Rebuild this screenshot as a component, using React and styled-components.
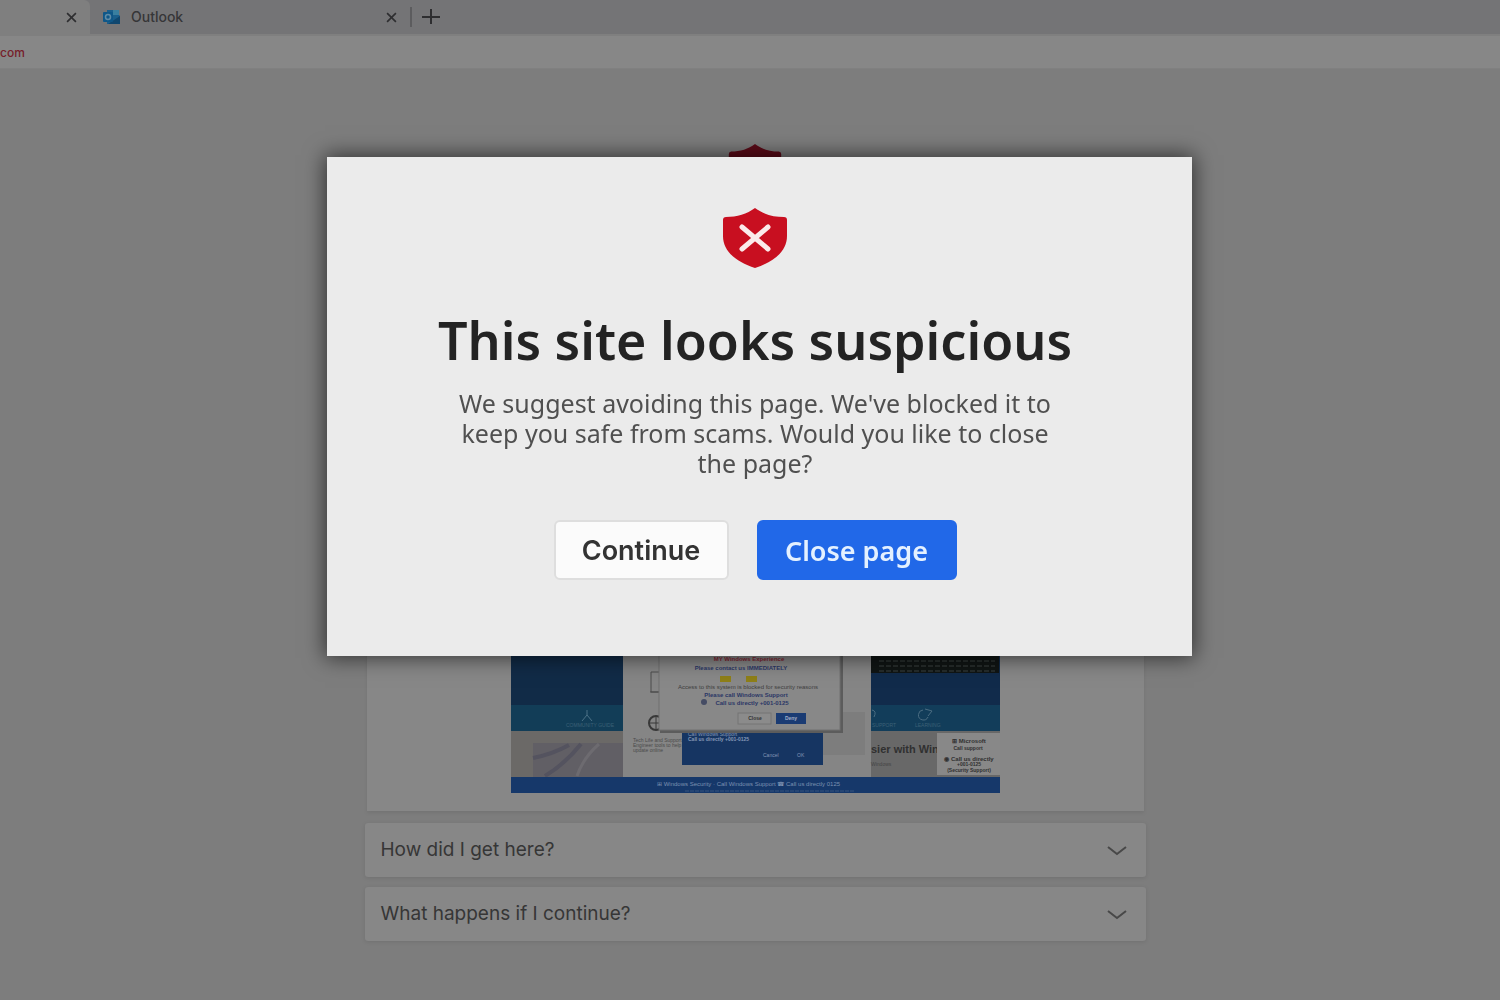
import styled, { createGlobalStyle } from 'styled-components';

const GlobalStyle = createGlobalStyle`
  * {
    box-sizing: border-box;
  }

  body {
    margin: 0;
    background: #7d7d7d;
    font-family: 'Noto Sans', 'Open Sans', sans-serif;
  }
`;

const Browser = styled.div`
  height: 100vh;
  overflow: hidden;
  display: flex;
  flex-direction: column;
`;

const TabStrip = styled.div`
  display: flex;
  align-items: center;
  height: 34px;
  background: #747476;
`;

const Tab = styled.div`
  display: flex;
  align-items: center;
  gap: 10px;
  width: ${({ $active }) => ($active ? '90px' : '320px')};
  height: 100%;
  padding: 0 13px;
  background: ${({ $active }) => ($active ? '#7f7f7f' : 'transparent')};
  border-top-right-radius: 6px;
  color: #363638;
  font: 500 14px/20px Inter, sans-serif;

  button {
    margin-left: auto;
  }
`;

const IconButton = styled.button`
  display: flex;
  padding: 0;
  border: none;
  background: none;
  color: #2e2e30;
`;

const Divider = styled.span`
  width: 2px;
  height: 20px;
  margin-right: 10px;
  background: #5c5c5e;
`;

const AddressBar = styled.div`
  display: flex;
  align-items: center;
  height: 35px;
  padding-top: 2px;
  border-top: 2px solid #7f7f7f;
  border-bottom: 1px solid #808080;
  background: #878787;
  color: #76202a;
  font: 500 12px/20px Inter, sans-serif;
`;

const Main = styled.main`
  display: flex;
  flex-direction: column;
  align-items: center;
  padding: 75px 0 0 10px;
`;

const Card = styled.section`
  display: flex;
  justify-content: center;
  width: 777px;
  margin: 264px 0 12px;
  padding: 60px 0 18px;
  background: #878787;
  box-shadow: 0 2px 4px rgba(0, 0, 0, 0.08);
`;

const Question = styled.button`
  display: flex;
  align-items: center;
  justify-content: space-between;
  width: 781px;
  height: 54px;
  margin-bottom: 10px;
  padding: 0 19px 0 16px;
  border: none;
  border-radius: 3px;
  background: #878787;
  box-shadow: 0 1px 4px rgba(0, 0, 0, 0.1);
  color: #363636;
  font: 400 19px/24px Inter, sans-serif;
`;

const Overlay = styled.div`
  position: fixed;
  inset: 0;
  display: flex;
  justify-content: center;
  align-items: flex-start;
  padding: 157px 0 0 19px;
`;

const Dialog = styled.div`
  display: flex;
  flex-direction: column;
  align-items: center;
  width: 865px;
  padding: 51px 9px 76px 0;
  background: #ebebeb;
  box-shadow: 0 0 20px 2px rgba(0, 0, 0, 0.6);
  text-align: center;
`;

const Title = styled.h1`
  margin: 38px 0 14px;
  color: #232323;
  font-size: 52px;
  font-weight: 600;
  line-height: 68px;
`;

const Message = styled.p`
  width: 620px;
  margin: 0 0 42px;
  color: #505050;
  font-size: 25px;
  line-height: 30px;
`;

const Actions = styled.div`
  display: flex;
  gap: 28px;
`;

const Action = styled.button`
  height: 60px;
  width: ${({ $primary }) => ($primary ? '200px' : '175px')};
  padding: 0;
  border: 2px solid ${({ $primary }) => ($primary ? '#2168e8' : '#dedede')};
  border-radius: 6px;
  background: ${({ $primary }) => ($primary ? '#2168e8' : '#fbfbfb')};
  color: ${({ $primary }) => ($primary ? '#e4f1ff' : '#333333')};
  font-family: ${({ $primary }) =>
    $primary ? "'Noto Sans', sans-serif" : 'Inter, sans-serif'};
  font-size: 27px;
  font-weight: 600;
`;

const Cross = ({ size }) => (
  <svg width={size} height={size} viewBox="0 0 10 10" stroke="currentColor" strokeWidth="1.5">
    <path d="M1 1l8 8M9 1l-8 8" />
  </svg>
);

const Shield = ({ width, height, color, mark }) => (
  <svg width={width} height={height} viewBox="0 0 66 60" preserveAspectRatio="none">
    <path
      fill={color}
      d="M33 0C25 6 15 9 4 9Q1 9 1 12V28C1 44 15 54 33 60C51 54 65 44 65 28V12Q65 9 62 9C51 9 41 6 33 0Z"
    />
    <path d="M20 19L46 41M46 19L20 41" stroke={mark} strokeWidth="5" strokeLinecap="round" />
  </svg>
);

const OutlookLogo = () => (
  <svg width="18" height="16" viewBox="0 0 18 16">
    <path fill="#1b5f8c" d="M5 1h11v5l1 1v8H4V1z" />
    <path fill="#3a7fa0" d="M10 1h6v5h-6z" />
    <path fill="#10476f" d="M5 15l12-8v8z" />
    <rect y="3" width="10" height="10" rx="1" fill="#0f5788" />
    <circle cx="5" cy="8" r="2.5" fill="none" stroke="#5f8ba6" strokeWidth="1.5" />
  </svg>
);

const Chevron = () => (
  <svg width="20" height="12" viewBox="0 0 20 12" fill="none" stroke="#484848" strokeWidth="2">
    <path d="M1 3l9 7 9-7" />
  </svg>
);

const ScamPreview = () => (
  <svg
    width="489"
    height="275"
    viewBox="0 0 489 275"
    fontFamily="'Liberation Sans', sans-serif"
    fontSize="6"
  >
    <rect width="489" height="275" fill="#858585" />
    {/* left side of the desktop */}
    <rect width="112" height="187" fill="#112b47" />
    <rect y="187" width="112" height="26" fill="#123d57" />
    <path d="M76 192v5l-5 6M76 197l5 6" stroke="#4b7186" fill="none" />
    <text x="55" y="209" fill="#3c6076" fontSize="5">COMMUNITY GUIDE</text>
    <rect y="213" width="112" height="46" fill="#6b6967" />
    <rect x="22" y="225" width="90" height="34" fill="#615f65" />
    <path d="M22 240Q42 236 58 227M34 258Q54 246 70 226" stroke="#54535f" strokeWidth="4" fill="none" />
    <path d="M66 258Q72 240 88 226" stroke="#6d6b70" strokeWidth="3" fill="none" />
    {/* article in the middle */}
    <path d="M148 154h-8v20h8M139 174h9" stroke="#4c4c4c" fill="none" />
    <circle cx="145" cy="205" r="7" fill="none" stroke="#383838" strokeWidth="2" />
    <path d="M139 205h10M145 199v12" stroke="#383838" />
    <g fill="#4b4b4b" fontSize="5">
      <text x="122" y="224">Tech Life and Support</text>
      <text x="122" y="229">Engineer tools to help</text>
      <text x="122" y="234">update online</text>
    </g>
    <rect x="312" y="194" width="42" height="43" fill="#7d7d7d" />
    <rect x="171" y="190" width="141" height="57" fill="#163562" />
    <g fill="#8497b5" fontSize="5">
      <text x="177" y="218">Call Windows Support</text>
      <text x="177" y="223" fontWeight="700">Call us directly +001-0125</text>
      <text x="252" y="239">Cancel</text>
      <text x="286" y="239">OK</text>
    </g>
    {/* warning popup */}
    <rect x="149" y="90" width="183" height="125" fill="#5c5c5c" />
    <rect x="148" y="90" width="181" height="122" fill="#888" stroke="#707070" />
    <g textAnchor="middle" fill="#2b3766" fontWeight="700">
      <text x="238" y="143" fill="#802632">MY Windows Experience</text>
      <text x="230" y="152">Please contact us IMMEDIATELY</text>
      <rect x="209" y="158" width="11" height="6" fill="#8e7f18" />
      <rect x="235" y="158" width="11" height="6" fill="#8e7f18" />
      <text x="237" y="171" fill="#404040" fontWeight="400">
        Access to this system is blocked for security reasons
      </text>
      <text x="235" y="179">Please call Windows Support</text>
      <circle cx="193" cy="184" r="3" fill="#454c64" />
      <text x="241" y="187">Call us directly +001-0125</text>
    </g>
    <rect x="227" y="195" width="33" height="11" fill="#8b8b8b" stroke="#747474" />
    <rect x="265" y="195" width="30" height="11" fill="#1a3b73" />
    <g textAnchor="middle" fontSize="5" fontWeight="700">
      <text x="244" y="202" fill="#333">Close</text>
      <text x="280" y="202" fill="#a2afc6">Deny</text>
    </g>
    {/* right side of the desktop */}
    <rect x="360" width="129" height="187" fill="#112b4b" />
    <rect x="360" width="128" height="155" fill="#101514" />
    <path d="M368 143h116M368 148h116M368 153h116" stroke="#3d4443" strokeDasharray="5 2" />
    <rect x="360" y="187" width="129" height="26" fill="#123d5a" />
    <path d="M361 192q5 1 2 7M412 192a5 5 0 1 0 5 7M414 191l7 2-4 5" stroke="#4b6d82" fill="none" />
    <text x="361" y="209" fill="#3c6076" fontSize="5">SUPPORT</text>
    <text x="404" y="209" fill="#3c6076" fontSize="5">LEARNING</text>
    <rect x="360" y="213" width="129" height="46" fill="#686868" />
    <text x="360" y="235" fill="#303030" fontSize="11" fontWeight="700">sier with Win</text>
    <text x="360" y="248" fill="#444" fontSize="5">Windows</text>
    <rect x="426" y="215" width="63" height="42" fill="#888" />
    <g textAnchor="middle" fill="#303030" fontWeight="700">
      <text x="458" y="225">⊞ Microsoft</text>
      <text x="457" y="232" fontSize="5">Call support</text>
      <text x="458" y="243">◉ Call us directly</text>
      <text x="458" y="248" fontSize="5">+001-0125</text>
      <text x="458" y="254" fontSize="5">(Security Support)</text>
    </g>
    <rect y="259" width="489" height="16" fill="#16386a" />
    <text x="146" y="268" fill="#7c90b0">
      ⊞ Windows Security · Call Windows Support ☎ Call us directly 0125
    </text>
    <path d="M174 273h170" stroke="#36547f" strokeDasharray="4 1" />
  </svg>
);

const questions = ['How did I get here?', 'What happens if I continue?'];

export default function App() {
  return (
    <Browser>
      <GlobalStyle />
      <TabStrip>
        <Tab $active>
          <IconButton aria-label="Close tab">
            <Cross size={11} />
          </IconButton>
        </Tab>
        <Tab>
          <OutlookLogo />
          Outlook
          <IconButton aria-label="Close Outlook tab">
            <Cross size={11} />
          </IconButton>
        </Tab>
        <Divider />
        <IconButton aria-label="New tab">
          <svg width="18" height="18" viewBox="0 0 18 18" stroke="currentColor" strokeWidth="2">
            <path d="M9 1v15M0 9h18" />
          </svg>
        </IconButton>
      </TabStrip>
      <AddressBar>com</AddressBar>
      <Main>
        <Shield width={54} height={50} color="#5c0b18" mark="#888888" />
        <Card>
          <ScamPreview />
        </Card>
        {questions.map((question) => (
          <Question key={question}>
            {question}
            <Chevron />
          </Question>
        ))}
      </Main>
      <Overlay>
        <Dialog role="dialog" aria-labelledby="warning-title">
          <Shield width={66} height={60} color="#c80f20" mark="#fbeaea" />
          <Title id="warning-title">This site looks suspicious</Title>
          <Message>
            We suggest avoiding this page. We've blocked it to keep you safe
            from scams. Would you like to close the page?
          </Message>
          <Actions>
            <Action>Continue</Action>
            <Action $primary>Close page</Action>
          </Actions>
        </Dialog>
      </Overlay>
    </Browser>
  );
}
